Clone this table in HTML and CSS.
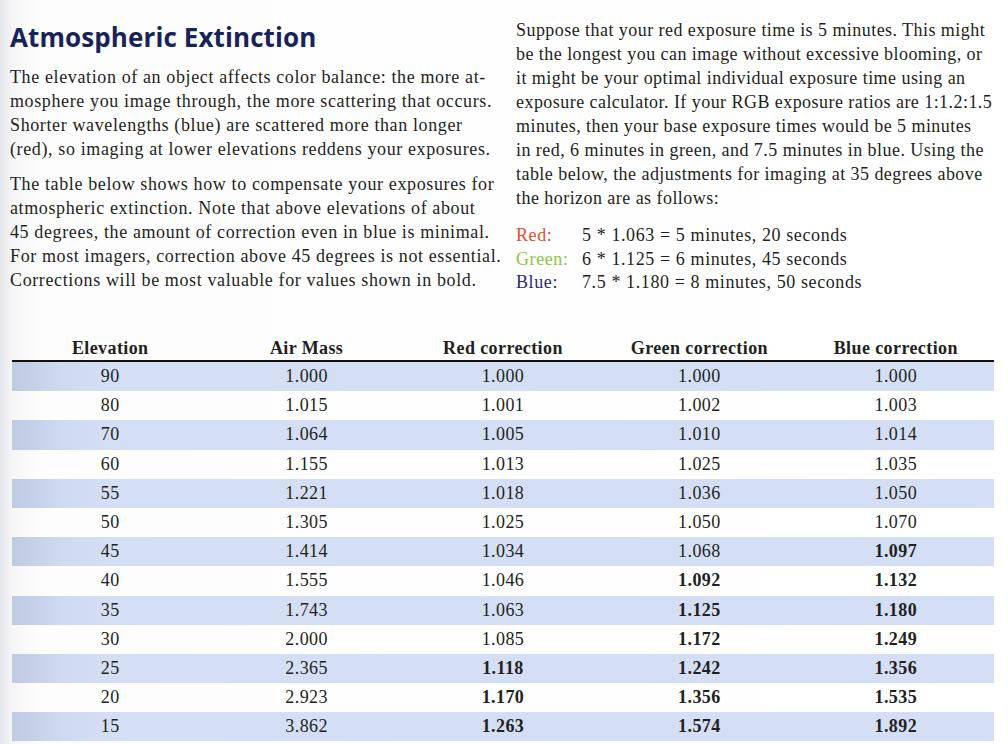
FILE: index.html
```html
<!DOCTYPE html>
<html>
<head>
<meta charset="utf-8">
<link rel="stylesheet" href="styles.css">
</head>
<body>
<div class="page">
  <div class="cols">
    <div class="left">
      <h1 class="title">Atmospheric Extinction</h1>
      <p class="para p1">The elevation of an object affects color balance: the more at-<br>mosphere you image through, the more scattering that occurs.<br>Shorter wavelengths (blue) are scattered more than longer<br>(red), so imaging at lower elevations reddens your exposures.</p>
      <p class="para p2">The table below shows how to compensate your exposures for<br>atmospheric extinction. Note that above elevations of about<br>45 degrees, the amount of correction even in blue is minimal.<br>For most imagers, correction above 45 degrees is not essential.<br>Corrections will be most valuable for values shown in bold.</p>
    </div>
    <div class="right">
      <p class="para r1">Suppose that your red exposure time is 5 minutes. This might<br>be the longest you can image without excessive blooming, or<br>it might be your optimal individual exposure time using an<br>exposure calculator. If your RGB exposure ratios are 1:1.2:1.5<br>minutes, then your base exposure times would be 5 minutes<br>in red, 6 minutes in green, and 7.5 minutes in blue. Using the<br>table below, the adjustments for imaging at 35 degrees above<br>the horizon are as follows:</p>
      <div class="calc">
        <div class="calc-row"><span class="lbl red">Red:</span><span>5 * 1.063 = 5 minutes, 20 seconds</span></div>
        <div class="calc-row"><span class="lbl green">Green:</span><span>6 * 1.125 = 6 minutes, 45 seconds</span></div>
        <div class="calc-row"><span class="lbl blue">Blue:</span><span>7.5 * 1.180 = 8 minutes, 50 seconds</span></div>
      </div>
    </div>
  </div>
  <table class="ext">
    <thead>
      <tr><th>Elevation</th><th>Air Mass</th><th>Red correction</th><th>Green correction</th><th>Blue correction</th></tr>
    </thead>
    <tbody>
      <tr class="sh"><td>90</td><td>1.000</td><td>1.000</td><td>1.000</td><td>1.000</td></tr>
      <tr><td>80</td><td>1.015</td><td>1.001</td><td>1.002</td><td>1.003</td></tr>
      <tr class="sh"><td>70</td><td>1.064</td><td>1.005</td><td>1.010</td><td>1.014</td></tr>
      <tr><td>60</td><td>1.155</td><td>1.013</td><td>1.025</td><td>1.035</td></tr>
      <tr class="sh"><td>55</td><td>1.221</td><td>1.018</td><td>1.036</td><td>1.050</td></tr>
      <tr><td>50</td><td>1.305</td><td>1.025</td><td>1.050</td><td>1.070</td></tr>
      <tr class="sh"><td>45</td><td>1.414</td><td>1.034</td><td>1.068</td><td class="b">1.097</td></tr>
      <tr><td>40</td><td>1.555</td><td>1.046</td><td class="b">1.092</td><td class="b">1.132</td></tr>
      <tr class="sh"><td>35</td><td>1.743</td><td>1.063</td><td class="b">1.125</td><td class="b">1.180</td></tr>
      <tr><td>30</td><td>2.000</td><td>1.085</td><td class="b">1.172</td><td class="b">1.249</td></tr>
      <tr class="sh"><td>25</td><td>2.365</td><td class="b">1.118</td><td class="b">1.242</td><td class="b">1.356</td></tr>
      <tr><td>20</td><td>2.923</td><td class="b">1.170</td><td class="b">1.356</td><td class="b">1.535</td></tr>
      <tr class="sh"><td>15</td><td>3.862</td><td class="b">1.263</td><td class="b">1.574</td><td class="b">1.892</td></tr>
    </tbody>
  </table>
</div>
</body>
</html>
```
FILE: styles.css
```css
html, body {
  margin: 0;
  padding: 0;
}
body {
  width: 1008px;
  height: 744px;
  overflow: hidden;
  background: linear-gradient(to right, #e4e5e9 0px, #f6f6f8 12px, #fdfdfd 40px, #ffffff 100%);
  color: #231f20;
  font-family: "Liberation Serif", "Times New Roman", serif;
}
.page {
  display: flex;
  flex-direction: column;
}
.cols {
  display: flex;
  height: 336px;
}
.left {
  width: 506px;
  padding-left: 10px;
  box-sizing: border-box;
}
.right {
  flex: 1;
  padding-left: 10px;
}
.title {
  margin: 22px 0 0 0;
  font-family: "Open Sans", "Noto Sans", sans-serif;
  font-weight: 700;
  font-size: 26px;
  line-height: 30px;
  letter-spacing: 0.1px;
  color: #18235a;
}
.para {
  margin: 0;
  font-size: 18px;
  letter-spacing: 0.45px;
  line-height: 24px;
  white-space: nowrap;
}
.left .para {
  letter-spacing: 0.62px;
}
.p1 {
  margin-top: 13px;
}
.p2 {
  margin-top: 11px;
}
.r1 {
  margin-top: 18px;
}
.calc {
  margin-top: 14px;
  font-size: 18px;
  letter-spacing: 0.6px;
  line-height: 23.5px;
}
.calc-row {
  display: flex;
}
.lbl {
  width: 66px;
  flex: none;
}
.red { color: #ee4a2a; }
.green { color: #8dc63f; }
.blue { color: #2b2a78; }

.ext {
  margin-left: 12px;
  width: 982px;
  border-collapse: collapse;
  table-layout: fixed;
  font-size: 18px;
  letter-spacing: 0.4px;
}
.ext th {
  font-weight: 700;
  height: 24px;
  padding: 0;
  text-align: center;
  border-bottom: 2.5px solid #111;
  vertical-align: middle;
}
.ext td {
  height: 29.2px;
  padding: 0;
  text-align: center;
  vertical-align: middle;
}
.ext tr.sh td {
  background: #d4dff5;
}
.ext tr.sh td:first-child {
  background: linear-gradient(to right, #bfcae2 0%, #cfdaf1 25%, #d4dff5 50%);
}
.ext td.b {
  font-weight: 700;
}
```
